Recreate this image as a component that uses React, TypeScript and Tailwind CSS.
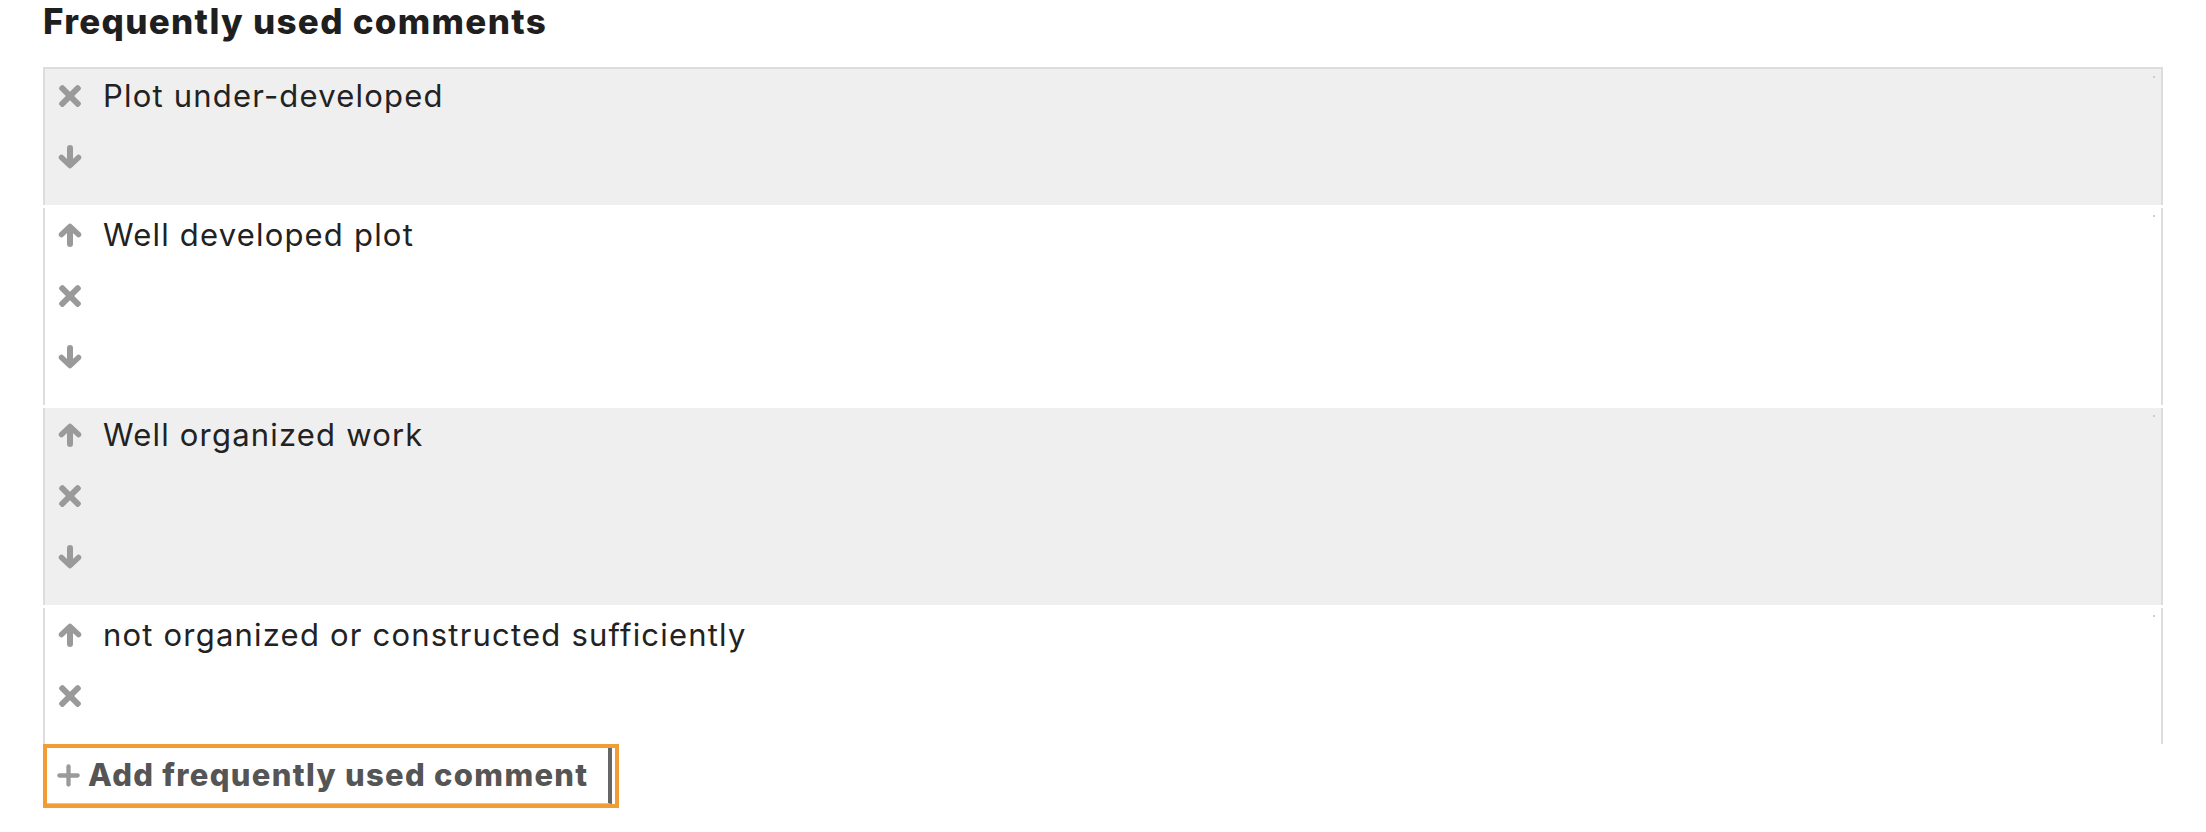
import React from 'react';

type Action = 'up' | 'remove' | 'down';

interface Comment {
  text: string;
  actions: Action[];
}

const comments: Comment[] = [
  { text: 'Plot under-developed', actions: ['remove', 'down'] },
  { text: 'Well developed plot', actions: ['up', 'remove', 'down'] },
  { text: 'Well organized work', actions: ['up', 'remove', 'down'] },
  { text: 'not organized or constructed sufficiently', actions: ['up', 'remove'] },
];

// thick arrow, head on top; rotated for "down"
const Arrow = ({ down = false }: { down?: boolean }) => (
  <svg
    width={24}
    height={24}
    viewBox="0 0 24 24"
    fill="none"
    stroke="#9a9a9a"
    strokeLinecap="round"
    strokeLinejoin="round"
    className={down ? 'rotate-180' : ''}
  >
    <polyline points="3.5,11.5 12,3.5 20.5,11.5" strokeWidth={5.5} />
    <line x1="12" y1="5" x2="12" y2="21" strokeWidth={6} />
  </svg>
);

const Times = () => (
  <svg width={22} height={22} viewBox="0 80 352 352" fill="#9a9a9a">
    <path d="M242.72 256l100.07-100.07c12.28-12.28 12.28-32.19 0-44.48l-22.24-22.24c-12.28-12.28-32.19-12.28-44.48 0L176 189.28 75.93 89.21c-12.28-12.28-32.19-12.28-44.48 0L9.21 111.45c-12.28 12.28-12.28 32.19 0 44.48L109.28 256 9.21 356.07c-12.28 12.28-12.28 32.19 0 44.48l22.24 22.24c12.28 12.28 32.2 12.28 44.48 0L176 322.72l100.07 100.07c12.28 12.28 32.2 12.28 44.48 0l22.24-22.24c12.28-12.28 12.28-32.19 0-44.48L242.72 256z" />
  </svg>
);

const Plus = () => (
  <svg width={23} height={23} viewBox="0 0 24 24" stroke="#9a9a9a" strokeWidth={4.5} strokeLinecap="round">
    <line x1="12" y1="2.5" x2="12" y2="21.5" />
    <line x1="2.5" y1="12" x2="21.5" y2="12" />
  </svg>
);

const icons: Record<Action, React.ReactNode> = {
  up: <Arrow />,
  remove: <Times />,
  down: <Arrow down />,
};

export default function App() {
  return (
    <div className="min-h-screen bg-white px-[43px] text-[#222]" style={{ fontFamily: 'Inter, "Noto Sans", sans-serif' }}>
      <h2 className="text-[35px] font-extrabold leading-[42px] tracking-[1.3px] text-[#1f1f1f] mb-[25px]">
        Frequently used comments
      </h2>

      <div className="border-t-2 border-[#ddd]">
        {comments.map((c, i) => (
          <div
            key={c.text}
            className={`relative flex border-x-2 border-[#ddd] ${i < comments.length - 1 ? 'mb-[3px]' : ''} ${i % 2 === 0 ? 'bg-[#efefef]' : 'bg-white'}`}
          >
            <div className="flex flex-col gap-[19px] pl-[13px] pt-[6px] pb-[27px]">
              {c.actions.map((a) => (
                <button key={a} type="button" className="flex h-[42px] w-[24px] items-center justify-center">
                  {icons[a]}
                </button>
              ))}
            </div>
            <div className="pl-[21px] pt-[6px] text-[31px] leading-[42px] tracking-[1.2px]">{c.text}</div>
            <span className="absolute right-[6px] top-[7px] h-[2px] w-[2px] bg-[#ccc]" />
          </div>
        ))}
      </div>

      <div className="w-[576px] border-4 border-[#f29c38]">
        <button
          type="button"
          className="flex h-[56px] w-[565px] items-center gap-[8px] border-b border-r-4 border-b-[#c8c8c8] border-r-[#666] bg-white pl-[10px] text-[31px] font-extrabold tracking-[1.3px] text-[#555]"
        >
          <Plus />
          Add frequently used comment
        </button>
      </div>
    </div>
  );
}
